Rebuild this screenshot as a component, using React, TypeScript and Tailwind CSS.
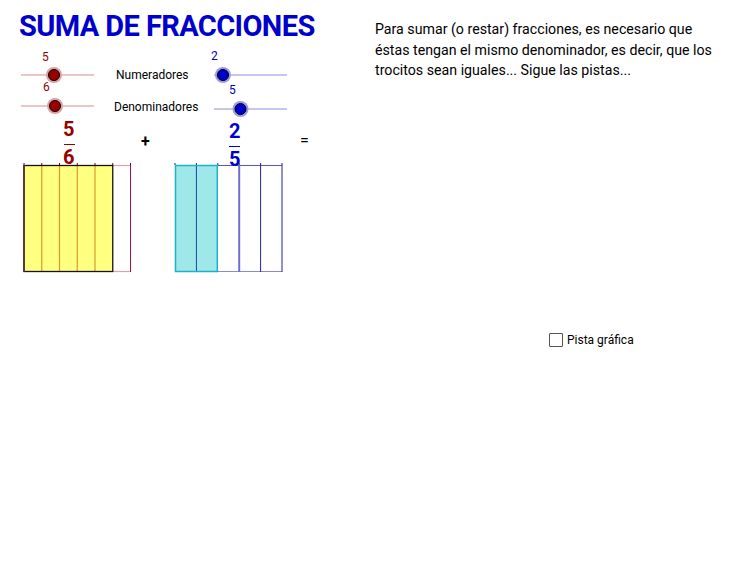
import React from 'react';

const RED = '#990000';
const BLUE = '#0000cc';

function Slider({ x1, x2, y, px, color, line, halo }: { x1: number; x2: number; y: number; px: number; color: string; line: string; halo: string }) {
  return (
    <g>
      <line x1={x1} y1={y} x2={x2} y2={y} stroke={line} strokeWidth={1} />
      <circle cx={px} cy={y} r={8} fill={halo} />
      <circle cx={px} cy={y} r={5.5} fill={color} stroke="#000" strokeWidth={1} />
    </g>
  );
}

export default function App() {
  const redW = (130.5 - 24) / 6;
  const blueW = (282 - 175) / 5;
  return (
    <div className="relative w-[748px] h-[574px] bg-white overflow-hidden font-['Roboto',sans-serif] text-black">
      <svg className="absolute inset-0" width={748} height={574}>
        <Slider x1={21} x2={94} y={75} px={54} color={RED} line="#d98c8c" halo="#dca0a0" />
        <Slider x1={21} x2={94} y={106} px={55} color={RED} line="#d98c8c" halo="#dca0a0" />
        <Slider x1={214} x2={287} y={75} px={223} color={BLUE} line="#8c8ce6" halo="#9a9ae8" />
        <Slider x1={214} x2={287} y={109} px={240.5} color={BLUE} line="#8c8ce6" halo="#9a9ae8" />

        {/* fraction bars */}
        <line x1={64} y1={144.5} x2={75} y2={144.5} stroke={RED} strokeWidth={1} />
        <line x1={229} y1={146.5} x2={240} y2={146.5} stroke={BLUE} strokeWidth={1} />

        {/* red whole */}
        <rect x={24} y={165} width={redW * 5} height={107} fill="#ffff80" />
        {[1, 2, 3, 4].map((i) => (
          <line key={i} x1={24 + redW * i} y1={165} x2={24 + redW * i} y2={272} stroke="#d89a30" strokeWidth={1.2} />
        ))}
        {[0, 1, 2, 3, 4, 5, 6].map((i) => (
          <line key={'t' + i} x1={24 + redW * i} y1={163} x2={24 + redW * i} y2={165} stroke="#660033" strokeWidth={1} />
        ))}
        <line x1={24 + redW * 5} y1={165.5} x2={24 + redW * 6} y2={165.5} stroke="#e0a0aa" strokeWidth={1.2} />
        <line x1={24 + redW * 5} y1={271.5} x2={24 + redW * 6} y2={271.5} stroke="#e0a0aa" strokeWidth={1.2} />
        <line x1={24 + redW * 6} y1={165} x2={24 + redW * 6} y2={272} stroke="#b0103a" strokeWidth={1} />
        <rect x={24} y={165.5} width={redW * 5} height={106} fill="none" stroke="#1a1010" strokeWidth={1.3} />
        <line x1={24} y1={165} x2={24} y2={272} stroke="#5a3030" strokeWidth={1.6} />

        {/* blue whole */}
        <rect x={175} y={165} width={blueW * 2} height={107} fill="#9ee8ea" />
        <line x1={175 + blueW * 2} y1={165.5} x2={282} y2={165.5} stroke="#5555cc" strokeWidth={1.2} />
        <line x1={175 + blueW * 2} y1={271.5} x2={282} y2={271.5} stroke="#8888dd" strokeWidth={1.2} />
        <line x1={175 + blueW * 3} y1={165} x2={175 + blueW * 3} y2={272} stroke="#7070cc" strokeWidth={2} />
        <line x1={175 + blueW * 4} y1={165} x2={175 + blueW * 4} y2={272} stroke="#2020a8" strokeWidth={1} />
        <line x1={282} y1={165} x2={282} y2={272} stroke="#2020a8" strokeWidth={1} />
        <line x1={175 + blueW} y1={165} x2={175 + blueW} y2={272} stroke="#1a40b0" strokeWidth={1} />
        {[0, 1, 2, 3, 4, 5].map((i) => (
          <line key={'b' + i} x1={175 + blueW * i} y1={163} x2={175 + blueW * i} y2={165} stroke="#1a1a80" strokeWidth={1} />
        ))}
        <rect x={175.5} y={165.5} width={blueW * 2 - 1} height={106} fill="none" stroke="#20b0c8" strokeWidth={1.5} />
      </svg>

      <div className="absolute left-[19px] top-[6px] text-[29px] leading-[40px] font-bold tracking-[-0.6px] text-[#0000cc] whitespace-nowrap">
        SUMA DE FRACCIONES
      </div>

      <p className="absolute left-[375px] top-[19px] w-[342px] text-[14.2px] leading-[20.5px] text-black">
        Para sumar (o restar) fracciones, es necesario que éstas tengan el mismo denominador, es decir, que los trocitos sean iguales... Sigue las pistas...
      </p>

      <span className="absolute left-[42px] top-[49px] text-[12px] leading-[16px] text-[#990000]">5</span>
      <span className="absolute left-[43px] top-[79px] text-[12px] leading-[16px] text-[#990000]">6</span>
      <span className="absolute left-[211px] top-[48px] text-[12px] leading-[16px] text-[#0000cc]">2</span>
      <span className="absolute left-[229px] top-[82px] text-[12px] leading-[16px] text-[#0000cc]">5</span>

      <span className="absolute left-[116px] top-[67px] text-[12px] leading-[16px]">Numeradores</span>
      <span className="absolute left-[114px] top-[99px] text-[12px] leading-[16px]">Denominadores</span>

      <span className="absolute left-[63px] top-[118px] text-[20px] leading-[22px] font-bold text-[#990000]">5</span>
      <span className="absolute left-[63px] top-[146px] text-[20px] leading-[22px] font-bold text-[#990000]">6</span>
      <span className="absolute left-[229px] top-[120px] text-[20px] leading-[22px] font-bold text-[#0000cc]">2</span>
      <span className="absolute left-[229px] top-[148px] text-[20px] leading-[22px] font-bold text-[#0000cc]">5</span>

      <span className="absolute left-[141px] top-[132px] text-[16px] leading-[20px] font-bold">+</span>
      <span className="absolute left-[300px] top-[131px] text-[16px] leading-[20px]">=</span>

      <label className="absolute left-[549px] top-[332px] flex items-center gap-[4px]">
        <span className="w-[14px] h-[14px] border border-[#555] rounded-[1px] bg-white" />
        <span className="text-[12px] leading-[16px]">Pista gráfica</span>
      </label>
    </div>
  );
}
